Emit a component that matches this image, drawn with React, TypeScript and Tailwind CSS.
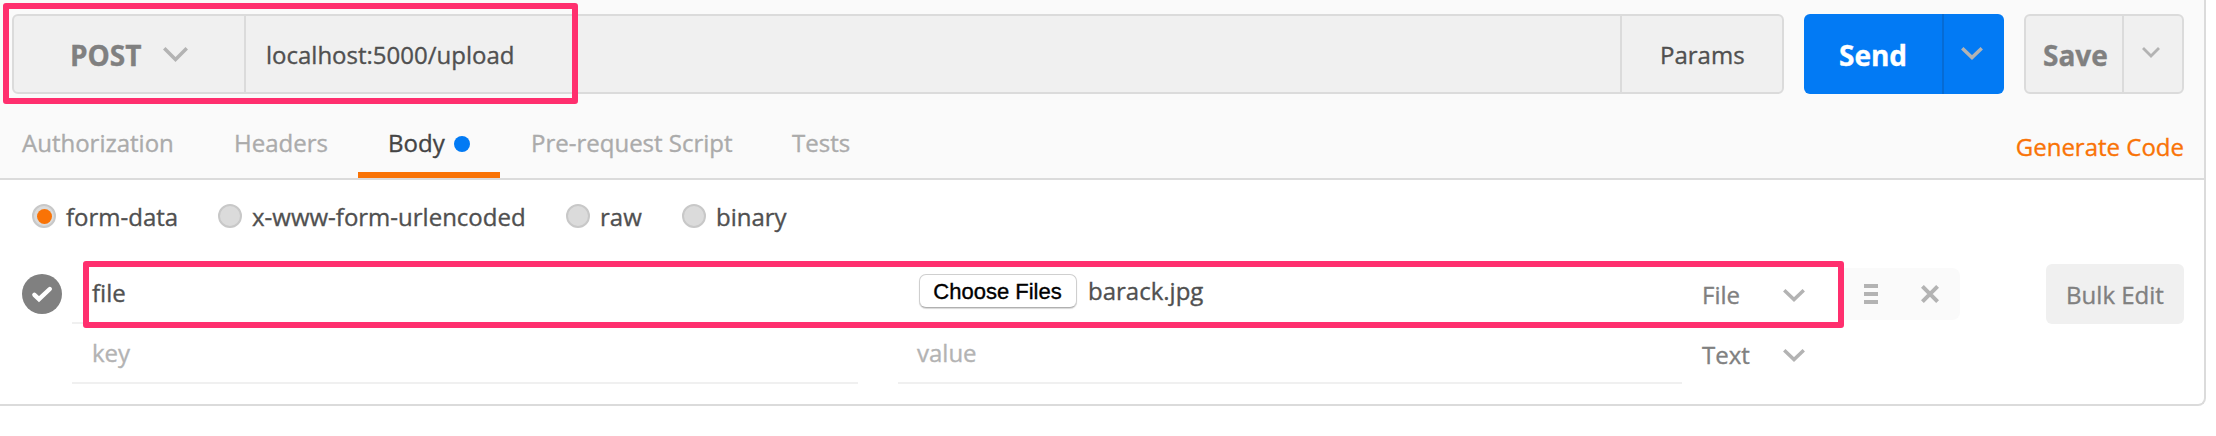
import React from "react";

type ChevronProps = { className: string; w: number; h: number; stroke?: number };

function Chevron({ className, w, h, stroke = 3.5 }: ChevronProps) {
  const i = stroke * 0.36;
  return (
    <svg className={className} width={w} height={h} viewBox={`0 0 ${w} ${h}`} fill="none">
      <path
        d={`M${i} ${i} L${w / 2} ${h - stroke * 0.72} L${w - i} ${i}`}
        stroke="currentColor"
        strokeWidth={stroke}
      />
    </svg>
  );
}

function RequestBar() {
  return (
    <div className="flex h-[80px] pl-[12px]">
      <div className="flex w-[1772px] rounded-[6px] border-2 border-[#dbdbdb] bg-[#f0f0f0]">
        <div className="flex w-[232px] border-r-2 border-[#dbdbdb] pl-[56px]">
          <span className="w-[93px] pt-[1px] text-[28px] leading-[76px] font-bold text-[#808080]">POST</span>
          <Chevron className="mt-[31px] text-[#b3b3b3]" w={25} h={15} />
        </div>
        <div className="flex-1 pt-[1px] pl-[20px] text-[24px] leading-[76px] text-[#505050]">localhost:5000/upload</div>
        <div className="w-[162px] border-l-2 border-[#dbdbdb] pt-[1px] pl-[38px] text-[24px] leading-[76px] text-[#505050]">
          Params
        </div>
      </div>
      <div className="ml-5 flex w-[200px] rounded-[6px] bg-[#027af4]">
        <div className="w-[138px] pt-[1px] pl-[35px] text-[28px] leading-[80px] font-bold text-white">Send</div>
        <div className="flex-1 border-l-2 border-[#066bd4] pt-[33px] pl-[17px]">
          <Chevron className="text-[#b3b3b3]" w={22} h={13} />
        </div>
      </div>
      <div className="ml-5 flex w-[160px] rounded-[6px] border-2 border-[#dbdbdb] bg-[#f0f0f0]">
        <div className="w-[96px] pt-[1px] pl-[17px] text-[28px] leading-[76px] font-bold text-[#808080]">Save</div>
        <div className="flex-1 border-l-2 border-[#dbdbdb] pt-[31px] pl-[18px]">
          <Chevron className="text-[#b3b3b3]" w={18} h={11} stroke={2.8} />
        </div>
      </div>
    </div>
  );
}

function Tabs() {
  return (
    <div className="flex h-[84px] text-[24px] leading-[32px] text-[#ababab]">
      <div className="w-[212px] pt-[33px] pl-[22px]">Authorization</div>
      <div className="w-[146px] pt-[33px] pl-[22px]">Headers</div>
      <div className="flex w-[142px] border-b-6 border-[#f97306] pt-[33px] pl-[30px] text-[#444]">
        <span className="w-[66px]">Body</span>
        <span className="mt-[9px] h-4 w-4 rounded-full bg-[#027af4]" />
      </div>
      <div className="w-[262px] pt-[33px] pl-[31px]">Pre-request Script</div>
      <div className="flex-1 pt-[33px] pl-[30px]">Tests</div>
      <div className="pt-[37px] pr-[20px] text-[#f97306]">Generate Code</div>
    </div>
  );
}

function Radio({ label, selected = false, className }: { label: string; selected?: boolean; className: string }) {
  return (
    <label className={className}>
      <span className="flex h-6 w-6 items-center justify-center rounded-full border-2 border-[#c8c8c8] bg-[#dbdbdb]">
        {selected && <span className="h-[15px] w-[15px] rounded-full bg-[#f97306]" />}
      </span>
      <span className="ml-[10px] pt-[1px]">{label}</span>
    </label>
  );
}

function FormRows() {
  return (
    <div className="flex text-[24px] text-[#505050]">
      <div className="w-[72px] pt-[10px] pl-[22px]">
        <svg width="40" height="40" viewBox="0 0 40 40" fill="none">
          <circle cx="20" cy="20" r="20" fill="#808080" />
          <path d="M12.4 20.8 L17 25.2 L27.8 15" stroke="#fff" strokeWidth="4.4" strokeLinecap="round" />
        </svg>
      </div>
      <div className="w-[786px]">
        <div className="h-[60px] border-b-2 border-[#f0f0f0] pt-[13px] pl-[20px] leading-[32px]">file</div>
        <div className="h-[60px] border-b-2 border-[#f0f0f0] pt-[13px] pl-[20px] leading-[32px] text-[#b3b3b3]">key</div>
      </div>
      <div className="ml-10 w-[784px]">
        <div className="flex h-[60px] border-b-2 border-[#f0f0f0] pt-[10px] pl-[21px]">
          <button className="h-[34px] w-[158px] rounded-[7px] border border-[#cfcfcf] border-b-[#b0b0b0] bg-white pr-[1px] font-['Liberation_Sans',sans-serif] text-[22px] leading-[34px] whitespace-nowrap text-black shadow-[0_1px_1px_#d8d8d8]">
            Choose Files
          </button>
          <span className="ml-[11px] pt-[1px] leading-[32px]">barack.jpg</span>
        </div>
        <div className="h-[60px] border-b-2 border-[#f0f0f0] pt-[13px] pl-[19px] leading-[32px] text-[#b3b3b3]">value</div>
      </div>
      <div className="w-[162px] text-[#808080]">
        <div className="flex h-[60px] pt-[15px] pl-[20px] leading-[32px]">
          <span className="w-[81px]">File</span>
          <Chevron className="mt-[10px] text-[#b3b3b3]" w={22} h={13} />
        </div>
        <div className="flex h-[60px] pt-[15px] pl-[20px] leading-[32px]">
          <span className="w-[81px]">Text</span>
          <Chevron className="mt-[10px] text-[#b3b3b3]" w={22} h={13} />
        </div>
      </div>
      <div className="mt-[4px] flex h-[52px] w-[116px] rounded-r-[8px] bg-[#fafafa] pt-4 pl-5">
        <svg width="14" height="20" viewBox="0 0 14 20" fill="#b3b3b3">
          <path d="M0 0h14v4H0zM0 8h14v4H0zM0 16h14v4H0z" />
        </svg>
        <svg className="mt-[1px] ml-[43px]" width="18" height="18" viewBox="0 0 18 18" fill="none">
          <path d="M1.4 1.4 L16.6 16.6 M16.6 1.4 L1.4 16.6" stroke="#b3b3b3" strokeWidth="4" />
        </svg>
      </div>
      <div className="ml-[86px] h-[60px] w-[138px] rounded-[6px] bg-[#f0f0f0] pt-[1px] text-center leading-[60px] text-[#808080]">
        Bulk Edit
      </div>
    </div>
  );
}

export default function App() {
  return (
    <div className="relative h-[436px] w-[2216px] overflow-hidden bg-white font-['Open_Sans',sans-serif] [-webkit-text-stroke:0.35px_currentColor]">
      <div className="h-[406px] w-[2206px] overflow-hidden rounded-br-[8px] border-r-2 border-b-2 border-[#dbdbdb]">
        <div className="border-b-2 border-[#dbdbdb] bg-[#fafafa] pt-[14px]">
          <RequestBar />
          <Tabs />
        </div>
        <div className="flex h-[84px] pt-6 pl-8 text-[24px] leading-[24px] text-[#505050]">
          <Radio className="flex h-6 w-[186px]" label="form-data" selected />
          <Radio className="flex h-6 w-[348px] whitespace-nowrap" label="x-www-form-urlencoded" />
          <Radio className="flex h-6 w-[116px]" label="raw" />
          <Radio className="flex h-6" label="binary" />
        </div>
        <FormRows />
      </div>
      <div className="absolute top-[3px] left-[3px] h-[101px] w-[575px] rounded-[3px] border-6 border-[#ff2f6e]" />
      <div className="absolute top-[261px] left-[83px] h-[67px] w-[1761px] rounded-[3px] border-6 border-[#ff2f6e]" />
    </div>
  );
}
